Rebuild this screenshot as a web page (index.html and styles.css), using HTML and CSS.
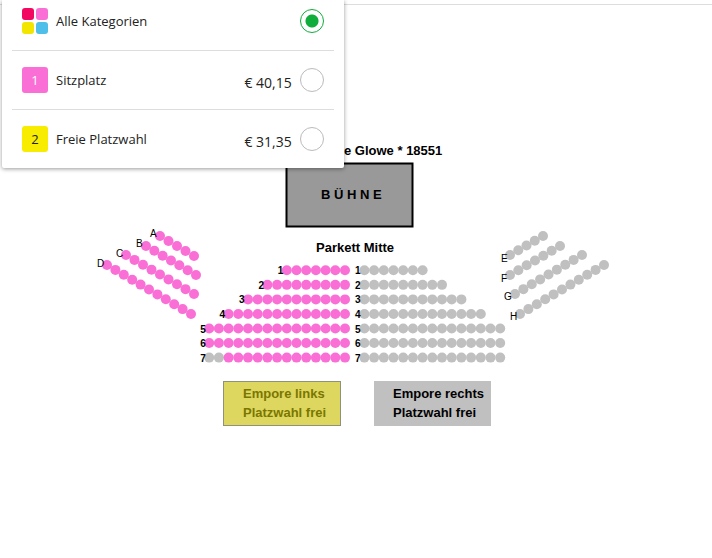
FILE: index.html
```
<!DOCTYPE html>
<html lang="de">
<head>
<meta charset="UTF-8">
<meta name="viewport" content="width=device-width, initial-scale=1.0">
<title>Saalplan</title>
<link rel="stylesheet" href="styles.css">
</head>
<body>

<header class="topbar"></header>

<form class="categories">
    <label class="category" for="catAll">
        <svg class="all-icon" viewBox="0 0 26 26" aria-hidden="true">
            <rect x="0" y="0" width="12" height="12" rx="3" fill="#f20761"/>
            <rect x="14" y="0" width="12" height="12" rx="3" fill="#fa6fd6"/>
            <rect x="0" y="14" width="12" height="12" rx="3" fill="#f2e600"/>
            <rect x="14" y="14" width="12" height="12" rx="3" fill="#4dbfe8"/>
        </svg>
        <span class="name">Alle Kategorien</span>
        <input type="radio" id="catAll" name="category" checked>
    </label>
    <label class="category" for="catSeat">
        <span class="badge pink">1</span>
        <span class="name">Sitzplatz</span>
        <span class="price">€ 40,15</span>
        <input type="radio" id="catSeat" name="category">
    </label>
    <label class="category" for="catFree">
        <span class="badge yellow">2</span>
        <span class="name">Freie Platzwahl</span>
        <span class="price">€ 31,35</span>
        <input type="radio" id="catFree" name="category">
    </label>
</form>

<main>
    <svg class="plan" viewBox="0 5 712 553">
        <text class="title" x="344" y="155">e Glowe * 18551</text>

        <rect class="stage" x="286.5" y="163.5" width="126" height="63"/>
        <text class="title" x="321" y="199">B Ü H N E</text>

        <text class="title" x="316" y="252">Parkett Mitte</text>
        <g id="seats"></g>

        <rect class="area-free" x="223.5" y="381.5" width="117" height="44"/>
        <text class="title olive" x="243" y="398">Empore links</text>
        <text class="title olive" x="243" y="417">Platzwahl frei</text>

        <rect class="area-taken" x="374" y="381" width="117" height="45"/>
        <text class="title" x="393" y="398">Empore rechts</text>
        <text class="title" x="393" y="417">Platzwahl frei</text>
    </svg>
</main>

<script>
    const seats = document.getElementById('seats');

    // side blocks: first seat, last seat, label position
    const sideRows = [
        { name: 'A', count: 5, from: [160, 236], to: [194, 256], label: [150, 237], free: true },
        { name: 'B', count: 7, from: [146, 246], to: [196, 275], label: [136, 247], free: true },
        { name: 'C', count: 9, from: [126, 255], to: [194, 294], label: [116, 257], free: true },
        { name: 'D', count: 11, from: [107, 265], to: [191, 314], label: [97, 267], free: true },
        { name: 'E', count: 5, from: [510, 255], to: [543, 236], label: [501, 262], free: false },
        { name: 'F', count: 7, from: [510, 275], to: [560, 246], label: [501, 282], free: false },
        { name: 'G', count: 9, from: [515, 294], to: [582, 255], label: [504, 300], free: false },
        { name: 'H', count: 11, from: [520, 314], to: [604, 265], label: [510, 320], free: false }
    ];
    const middleRows = [7, 9, 11, 13, 15, 15, 15];
    const gap = 9.7;

    function addShape(tag, attrs, text) {
        const el = document.createElementNS('http://www.w3.org/2000/svg', tag);
        for (const key in attrs) {
            el.setAttribute(key, attrs[key]);
        }
        if (text) {
            el.textContent = text;
        }
        seats.appendChild(el);
    }

    function addSeat(x, y, free) {
        addShape('circle', { cx: x, cy: y, r: 5, class: free ? 'seat free' : 'seat' });
    }

    sideRows.forEach(row => {
        for (let i = 0; i < row.count; i++) {
            const t = i / (row.count - 1);
            addSeat(row.from[0] + (row.to[0] - row.from[0]) * t, row.from[1] + (row.to[1] - row.from[1]) * t, row.free);
        }
        addShape('text', { x: row.label[0], y: row.label[1], class: 'row-letter' }, row.name);
    });

    middleRows.forEach((count, index) => {
        const y = 270.3 + index * 14.55;
        const left = 345 - (count - 1) * gap;
        for (let i = 0; i < count; i++) {
            // the two outer seats of row 7 are sold
            addSeat(left + i * gap, y, !(index === 6 && i < 2));
            addSeat(364.4 + i * gap, y, false);
        }
        addShape('text', { x: left - 9, y: Math.round(y + 4), class: 'row-number' }, index + 1);
        addShape('text', { x: 355, y: Math.round(y + 4), class: 'row-number' }, index + 1);
    });
</script>

</body>
</html>
```
FILE: styles.css
```
body {
    font-family: "Open Sans", "Noto Sans", sans-serif;
    font-size: 13px;
    color: #222;
    background-color: #fff;
    margin: 0;
    position: relative;
}
.topbar {
    height: 4px;
    border-bottom: 1px solid #ddd;
}
.categories {
    position: absolute;
    top: 0;
    left: 2px;
    width: 48%;
    min-width: 320px;
    box-sizing: border-box;
    padding: 0 10px;
    background-color: #fff;
    border-radius: 0 0 2px 2px;
    box-shadow: 0 1px 4px rgba(0, 0, 0, 0.4);
}
.category {
    display: flex;
    align-items: center;
    padding: 16px 10px;
    border-bottom: 1px solid #ddd;
    cursor: pointer;
}
.category:first-child {
    padding-top: 8px;
}
.category:last-child {
    border-bottom: none;
}
.all-icon,
.badge {
    width: 26px;
    height: 26px;
    margin-right: 8px;
}
.badge {
    border-radius: 3px;
    line-height: 26px;
    text-align: center;
}
.pink {
    background-color: #fa6fd6;
    color: #fff;
}
.yellow {
    background-color: #f8ec00;
}
.name {
    flex: 1;
}
.price {
    font-size: 14px;
    margin-right: 8px;
    padding-top: 4px;
}
input[type="radio"] {
    appearance: none;
    width: 24px;
    height: 24px;
    margin: 0;
    border: 1px solid #bbb;
    border-radius: 50%;
    background-color: #fff;
}
input[type="radio"]:checked {
    border: 1px solid #0ead3c;
    background: radial-gradient(circle, #0ead3c 6px, #fff 7px);
}
.plan {
    display: block;
    width: 100%;
    height: auto;
    font-family: "Liberation Sans", Arial, sans-serif;
}
.title {
    font-size: 13px;
    font-weight: bold;
    fill: #000;
}
.olive {
    fill: #7b7600;
}
.stage {
    fill: #999;
    stroke: #000;
    stroke-width: 2;
}
.area-free {
    fill: #ddd75f;
    stroke: #8f9178;
}
.area-taken {
    fill: #c0c0c0;
}
.seat {
    fill: #c0c0c0;
}
.seat.free {
    fill: #fa6fd6;
}
.row-letter {
    font-size: 10px;
    fill: #000;
}
.row-number {
    font-size: 10px;
    font-weight: bold;
    fill: #000;
}
```
